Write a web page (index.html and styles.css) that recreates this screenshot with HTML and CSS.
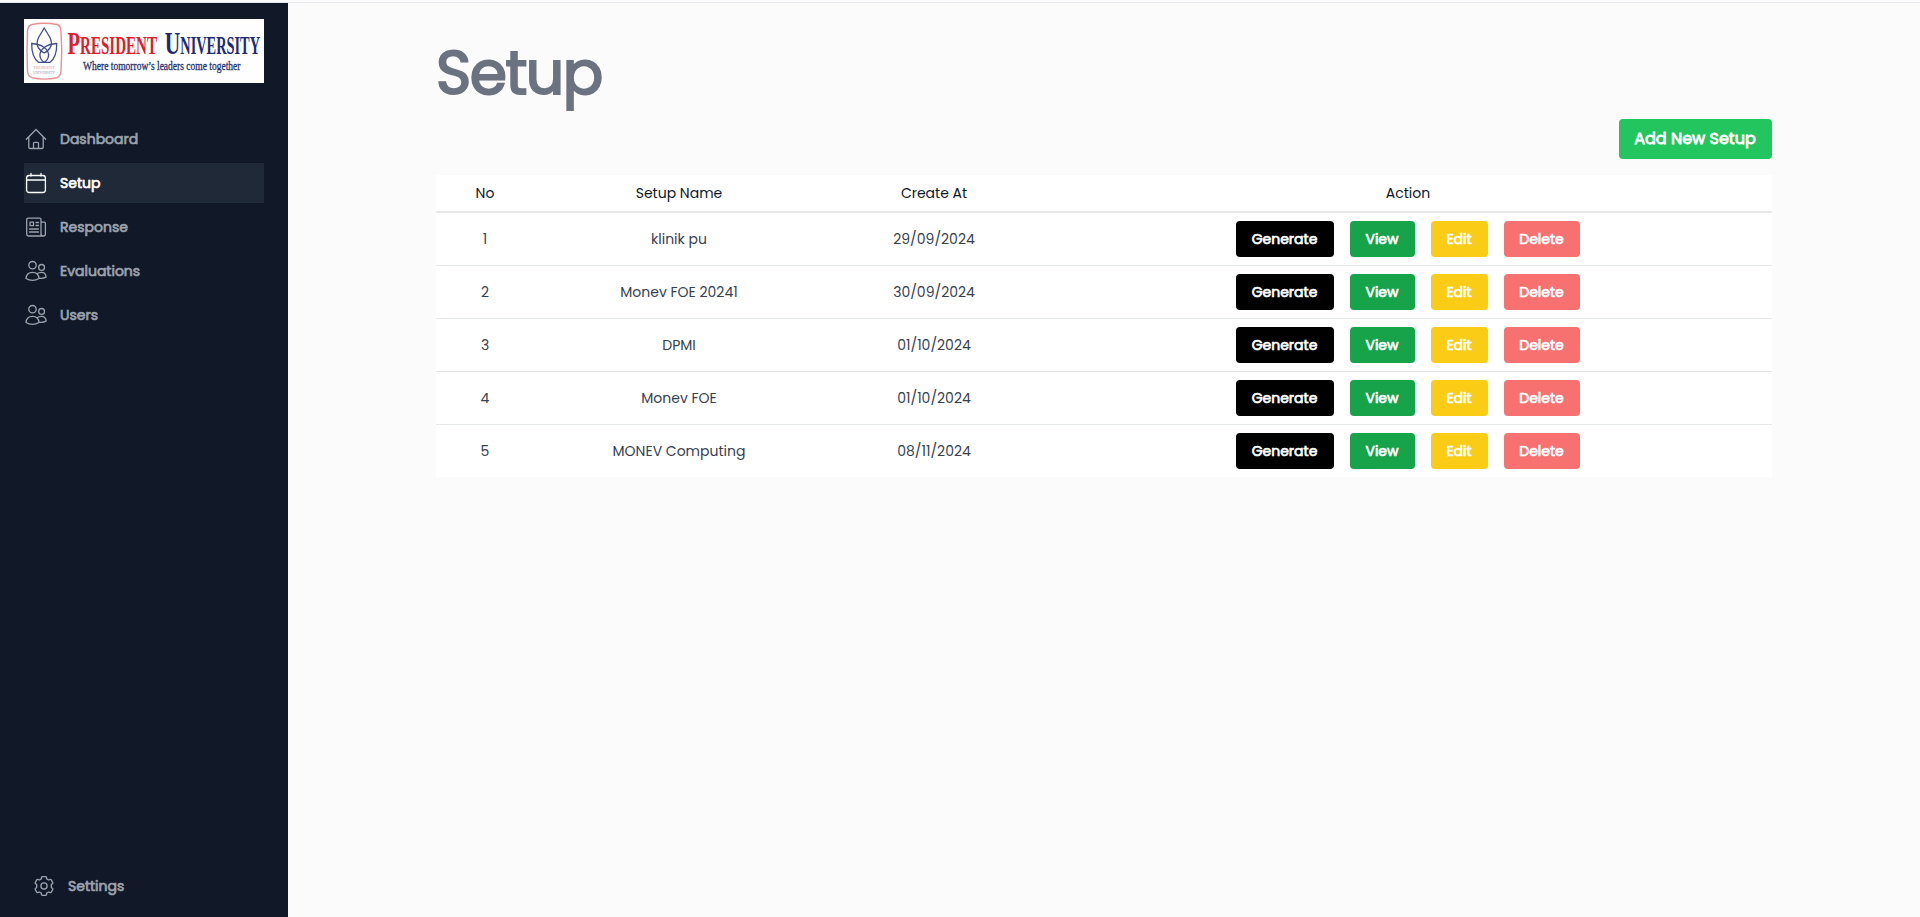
FILE: index.html
```html
<!DOCTYPE html>
<html lang="en">
<head>
<meta charset="utf-8">
<title>Setup</title>
<link rel="stylesheet" href="styles.css">
</head>
<body>
<div class="shell">
  <aside class="sidebar">
    <svg class="logo" viewBox="0 0 240 64" role="img" aria-label="President University">
      <rect width="240" height="64" fill="#fefefe"/>
      <path d="M8 5.500Q20 3 33 5.500Q36.500 6.500 37 12Q38.500 32 37 52Q36.500 57.500 33 58.700Q20 61.500 8 58.700Q4 57.500 3.500 52Q2.500 32 3.500 12Q4 6.500 8 5.500Z" fill="none" stroke="#eb8f8f" stroke-width="1.400"/>
      <g fill="none" stroke="#3f4e8a" stroke-width="1.300">
        <path d="M20.200 9Q17 14.500 14.800 18Q11.500 24.500 14.500 29Q17 32.500 20.200 34Q23.500 32.500 26 29Q29 24.500 25.700 18Q23.500 14.500 20.200 9Z"/>
        <path d="M7.700 24.500Q7.500 38 14.500 43.300H26Q33 38 32.700 24.500Q25 25 20.200 28.500Q15.500 25 7.700 24.500Z"/>
        <path d="M20.200 28.500Q15.500 32 16 37Q16.500 41 20.200 43.300Q24 41 24.500 37Q25 32 20.200 28.500Z"/>
      </g>
      <text class="crest" x="9.500" y="50" textLength="21" lengthAdjust="spacingAndGlyphs">PRESIDENT</text>
      <text class="crest crest-blue" x="9" y="54.800" textLength="22" lengthAdjust="spacingAndGlyphs">UNIVERSITY</text>
      <text class="brand cap brand-red" x="43.500" y="34.800" textLength="12.500" lengthAdjust="spacingAndGlyphs">P</text>
      <text class="brand brand-red" x="56" y="34.800" textLength="77" lengthAdjust="spacingAndGlyphs">RESIDENT</text>
      <text class="brand cap brand-blue" x="140.800" y="34.800" textLength="15.500" lengthAdjust="spacingAndGlyphs">U</text>
      <text class="brand brand-blue" x="156.300" y="34.800" textLength="79.700" lengthAdjust="spacingAndGlyphs">NIVERSITY</text>
      <text class="motto" x="59" y="51" textLength="157.500" lengthAdjust="spacingAndGlyphs">Where tomorrow’s leaders come together</text>
    </svg>
    <nav class="nav">
      <a class="link"><svg class="icon" viewBox="0 0 24 24"><path d="M2.300 12.200 12 2.500l9.700 9.700M4.800 10v10.200q0 1.300 1.300 1.300h11.800q1.300 0 1.300-1.300V10M9.500 21.500v-5.200q0-1 1-1h3q1 0 1 1v5.200"/></svg><span>Dashboard</span></a>
      <a class="link active"><svg class="icon" viewBox="0 0 24 24"><rect x="2.600" y="4.500" width="18.800" height="17" rx="2.500"/><path d="M2.600 9h18.800M7 2.500v2.500M17 2.500v2.500"/></svg><span>Setup</span></a>
      <a class="link"><svg class="icon" viewBox="0 0 24 24"><path d="M17 20.500V4.700q0-1.500-1.500-1.500H4.200q-1.500 0-1.500 1.500v14.500q0 1.800 1.800 1.800h14.800q2.100 0 2.100-2V8.200q0-1-1-1H17M17 18.500q0 2.500 2.200 2.500M6 7.200h3.500v3.500H6zM12 7.500h2.500M12 10.500h2.500M5.500 14h9M5.500 17h9"/></svg><span>Response</span></a>
      <a class="link"><svg class="icon" viewBox="0 0 24 24"><use href="#people"/></svg><span>Evaluations</span></a>
      <a class="link"><svg class="icon" viewBox="0 0 24 24"><g id="people"><circle cx="8.500" cy="6.200" r="3.700"/><circle cx="17.600" cy="8.400" r="2.900"/><path d="M2 19.500q.4-6.200 6.500-6.200t6.500 6.200q-3 1.800-6.500 1.800t-6.500-1.800zM13 14.800q1.600-1.500 4.600-1.500 4.200 0 4.500 4.900-3 1.500-7.200 1"/></g></svg><span>Users</span></a>
    </nav>
    <a class="link settings"><svg class="icon" viewBox="0 0 24 24"><path d="M10.300 2.600h3.400q.6 0 .7.600l.3 1.700 1.900 1.100 1.600-.6q.6-.2.900.3l1.700 2.900q.3.500-.2.900l-1.300 1.100v2.800l1.300 1.100q.5.400.2.900l-1.700 2.900q-.3.500-.9.300l-1.600-.6-1.900 1.100-.3 1.700q-.1.600-.7.600h-3.400q-.6 0-.7-.6l-.3-1.700L7.400 18l-1.600.6q-.6.200-.9-.3l-1.700-2.900q-.3-.5.200-.9l1.300-1.100v-2.800L3.400 9.500q-.5-.4-.2-.9l1.700-2.900q.3-.5.900-.3l1.600.6 1.900-1.100.3-1.700q.1-.6.700-.6z"/><circle cx="12" cy="12" r="3.100"/></svg><span>Settings</span></a>
  </aside>
  <main class="main">
    <h1 class="title">Setup</h1>
    <div class="toolbar"><button class="btn add">Add New Setup</button></div>
    <table class="table">
      <colgroup><col class="c-no"><col class="c-name"><col class="c-date"><col class="c-action"></colgroup>
      <thead><tr><th>No</th><th>Setup Name</th><th>Create At</th><th>Action</th></tr></thead>
      <tbody>
        <tr><td>1</td><td>klinik pu</td><td>29/09/2024</td><td><div class="actions"><button class="btn generate">Generate</button><button class="btn view">View</button><button class="btn edit">Edit</button><button class="btn delete">Delete</button></div></td></tr>
        <tr><td>2</td><td>Monev FOE 20241</td><td>30/09/2024</td><td><div class="actions"><button class="btn generate">Generate</button><button class="btn view">View</button><button class="btn edit">Edit</button><button class="btn delete">Delete</button></div></td></tr>
        <tr><td>3</td><td>DPMI</td><td>01/10/2024</td><td><div class="actions"><button class="btn generate">Generate</button><button class="btn view">View</button><button class="btn edit">Edit</button><button class="btn delete">Delete</button></div></td></tr>
        <tr><td>4</td><td>Monev FOE</td><td>01/10/2024</td><td><div class="actions"><button class="btn generate">Generate</button><button class="btn view">View</button><button class="btn edit">Edit</button><button class="btn delete">Delete</button></div></td></tr>
        <tr><td>5</td><td>MONEV Computing</td><td>08/11/2024</td><td><div class="actions"><button class="btn generate">Generate</button><button class="btn view">View</button><button class="btn edit">Edit</button><button class="btn delete">Delete</button></div></td></tr>
      </tbody>
    </table>
  </main>
</div>
</body>
</html>
```
FILE: styles.css
```css
* { box-sizing: border-box; }
body { margin: 0; padding-top: 2px; background: #fbfbfb; font-family: Poppins, Inter, "Liberation Sans", sans-serif; font-size: 14px; line-height: 20px; color: #374151; }
.shell { display: flex; height: 915px; border-top: 1px solid #e5e7eb; }
.sidebar { width: 288px; background: #111827; padding: 16px 24px 11px; display: flex; flex-direction: column; }
.logo { display: block; width: 240px; height: 64px; }
.brand { font-family: "Liberation Serif", serif; font-size: 24.5px; font-weight: bold; }
.cap { font-size: 32.5px; }
.brand-red { fill: #dc1f2b; }
.brand-blue { fill: #1f2a72; }
.motto { font-family: "Liberation Serif", serif; font-size: 12px; fill: #27326f; stroke: #27326f; stroke-width: 0.3px; }
.crest { font-family: "Liberation Serif", serif; font-size: 5px; fill: #e59a9a; }
.crest-blue { fill: #9299bd; }
.nav { display: flex; flex-direction: column; gap: 4px; margin-top: 36px; }
.link { display: flex; align-items: center; gap: 12px; height: 40px; color: #9ca3af; -webkit-text-stroke: 0.7px currentColor; }
.active { background: #1f2937; color: #fff; }
.settings { margin-top: auto; padding-left: 8px; }
.icon { width: 24px; height: 24px; fill: none; stroke: currentColor; stroke-width: 1.3; stroke-linecap: round; stroke-linejoin: round; }
.main { flex: 1; padding: 40px 148px 0; }
.title { margin: 0; height: 60px; font-size: 60px; line-height: 60px; font-weight: 400; letter-spacing: -1.5px; color: #6b7280; -webkit-text-stroke: 2px currentColor; }
.toolbar { display: flex; justify-content: flex-end; margin: 16px 0; }
.btn { border: 0; border-radius: 4px; padding: 0 1px 0 0; height: 36px; color: #fff; font: 400 14px/20px Poppins, Inter, "Liberation Sans", sans-serif; -webkit-text-stroke: 0.7px #fff; }
.add { width: 153px; height: 40px; font-size: 16px; background: #22c55e; -webkit-text-stroke-width: 0.8px; }
.table { width: 1336px; table-layout: fixed; border-collapse: separate; border-spacing: 0; background: #fff; text-align: center; }
.c-no { width: 98px; }
.c-name { width: 290px; }
.c-date { width: 220px; }
th { height: 38px; padding: 0; border-bottom: 2px solid #e5e7eb; font-weight: 400; color: #111827; }
td { height: 53px; padding: 0; border-bottom: 1px solid #e5e7eb; }
tbody tr:last-child td { height: 52px; border-bottom: 0; }
.actions { display: flex; justify-content: center; gap: 16px; }
.generate { width: 98px; background: #000; }
.view { width: 65px; background: #16a34a; }
.edit { width: 57px; background: #facc15; }
.delete { width: 76px; background: #f87171; }
```
